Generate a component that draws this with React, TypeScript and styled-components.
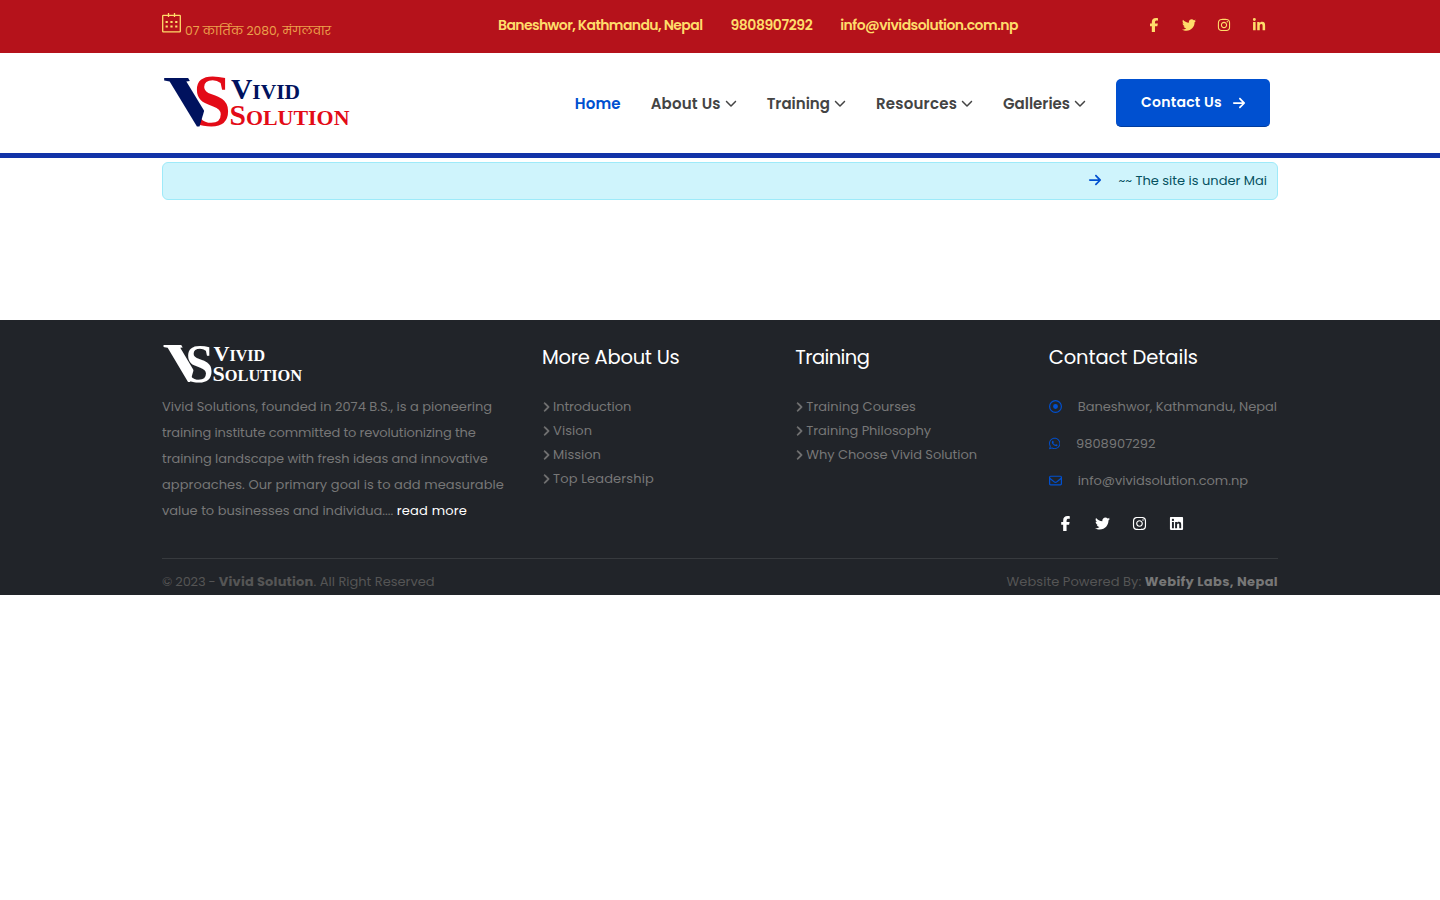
import React from "react";
import styled, { createGlobalStyle } from "styled-components";
import {
  FaFacebookF, FaTwitter, FaInstagram, FaLinkedinIn, FaLinkedin, FaArrowRight,
  FaRegCircleDot, FaWhatsapp, FaRegEnvelope, FaChevronRight, FaChevronDown,
} from "react-icons/fa6";

const Global = createGlobalStyle`
  *, *::before, *::after { box-sizing: border-box; }
  body { margin: 0; background: #fff; font-family: Poppins, Inter, "Noto Sans", sans-serif; font-size: 13px; color: #777; }
  a { color: inherit; text-decoration: none; }
  ul { list-style: none; margin: 0; padding: 0; }
  p, h4 { margin: 0; font-weight: 400; }
  svg { display: block; flex-shrink: 0; }
`;

const Container = styled.div`
  width: 1116px;
  margin: 0 auto;
`;

const TopBar = styled.div`
  height: 53px;
  background: #b5121b;
  color: #ffdc6a;
`;
const TopRow = styled(Container)`
  display: flex;
  height: 50px;
  align-items: center;
`;
const DateBox = styled.div`
  display: flex;
  align-self: flex-start;
  width: 336px;
  gap: 4px;
  padding-top: 13px;
`;
const DateText = styled.span`
  padding-top: 8px;
  font-size: 12.35px;
  line-height: 20px;
  color: #eba04b;
`;
const TopContacts = styled.div`
  display: flex;
  gap: 28px;
  font-size: 14px;
  font-weight: 600;
`;
const TopText = styled.span<{ $ls: number }>`
  letter-spacing: ${(p) => p.$ls}px;
  white-space: nowrap;
`;
const TopSocial = styled.div`
  display: flex;
  margin-left: auto;
  padding-right: 12px;
  gap: 21px;
  font-size: 14px;
`;

const Header = styled.header`
  height: 105px;
  border-bottom: 5px solid #1233a8;
`;
const HeaderRow = styled(Container)`
  display: flex;
  align-items: center;
  height: 100px;
  padding-right: 8px;
`;
const Nav = styled.nav`
  display: flex;
  align-items: center;
  margin-left: auto;
  gap: 30px;
  font-size: 15px;
  font-weight: 600;
`;
const NavItem = styled.a<{ $active?: boolean; $ls: number }>`
  display: flex;
  align-items: center;
  gap: 4px;
  letter-spacing: ${(p) => p.$ls}px;
  color: ${(p) => (p.$active ? "#0050d0" : "#444")};
`;
const ContactButton = styled.a`
  display: flex;
  align-items: center;
  justify-content: center;
  gap: 10px;
  width: 154px;
  height: 48px;
  padding-left: 1px;
  border-radius: 5px;
  background: #0050d0;
  border-bottom: 1px solid #003c9e;
  color: #fff;
  font-size: 14px;
  letter-spacing: 0.25px;
`;

const Notice = styled(Container)`
  display: flex;
  align-items: center;
  justify-content: flex-end;
  gap: 16px;
  height: 38px;
  margin-top: 4px;
  padding-right: 10px;
  border: 1px solid #9eeaf9;
  border-radius: 6px;
  background: #cff4fc;
  color: #055160;
  svg { color: #0050d0; margin-bottom: 2px; }
`;

const Footer = styled.footer`
  height: 275px;
  margin-top: 120px;
  padding-top: 24px;
  background: #212429;
`;
const Columns = styled(Container)`
  display: grid;
  grid-template-columns: 356px repeat(3, 229.33px);
  column-gap: 24px;
  height: 214px;
`;
const About = styled.p`
  padding-top: 9px;
  line-height: 26px;
  white-space: nowrap;
`;
const AboutLine = styled.span<{ $ls?: number }>`
  display: block;
  letter-spacing: ${(p) => p.$ls ?? 0}px;
  a { color: #fff; letter-spacing: 0.2px; }
`;
const Title = styled.h4<{ $ls: number }>`
  padding-top: 1px;
  font-size: 19.5px;
  line-height: 26px;
  letter-spacing: ${(p) => p.$ls}px;
  color: #fff;
  margin-bottom: 24px;
`;
const LinkRow = styled.li<{ $ls: number }>`
  display: flex;
  align-items: center;
  gap: 2px;
  height: 24px;
  margin-left: -1px;
  letter-spacing: ${(p) => p.$ls}px;
  white-space: nowrap;
`;
const ContactRow = styled.li<{ $icon?: number }>`
  display: flex;
  align-items: center;
  gap: 16px;
  height: 24px;
  margin-bottom: 13px;
  white-space: nowrap;
  svg { width: ${(p) => p.$icon ?? 13}px; color: #0050d0; margin-bottom: 1px; }
`;
const FootSocial = styled.div`
  display: flex;
  gap: 22px;
  padding: 10px 0 0 9px;
  color: #fff;
  font-size: 15px;
`;
const Bottom = styled(Container)`
  display: flex;
  justify-content: space-between;
  padding-top: 13px;
  border-top: 1px solid #373a3e;
  line-height: 20px;
  color: #555;
`;
const Credit = styled.span<{ $ls: number }>`
  letter-spacing: ${(p) => p.$ls}px;
`;
const Strong = styled.b<{ $ls: number; $color: string }>`
  letter-spacing: ${(p) => p.$ls}px;
  color: ${(p) => p.$color};
`;

const CalendarIcon = () => (
  <svg width="19" height="20" viewBox="0 0 19 20" fill="none" stroke="#ffdc6a" strokeWidth="1.3">
    <rect x="0.7" y="2.4" width="17.6" height="16.4" rx="0.6" />
    <path d="M6.5 0v4M12.5 0v4" />
    <path d="M3.6 8.9h2.2M8.4 8.9h2.2M13.2 8.9h2.2M3.6 13.4h2.2M8.4 13.4h2.2M13.2 13.4h2.2" strokeWidth="2" />
  </svg>
);

function Logo({ id, width, height, blue, red, edge }: { id: string; width: number; height: number; blue: string; red: string; edge: string }) {
  return (
    <svg width={width} height={height} viewBox="0 0 190 54" preserveAspectRatio="none" fontFamily="Liberation Serif" fontWeight="700">
      <clipPath id={id}><path d="M0 0H25L43 32L36.5 54H0z" /></clipPath>
      <text x="31" y="50" fontSize="73" fill={red} textLength="38" lengthAdjust="spacingAndGlyphs">S</text>
      <g clipPath={`url(#${id})`}>
        <text x="1" y="49" fontSize="72" fill={blue} stroke={edge} strokeWidth="1" paintOrder="stroke" textLength="74" lengthAdjust="spacingAndGlyphs">V</text>
      </g>
      <text x="69" y="23" fontSize="29" fill={blue} textLength="69" lengthAdjust="spacingAndGlyphs">V<tspan fontSize="21">IVID</tspan></text>
      <text x="67.5" y="49" fontSize="29" fill={red} textLength="120" lengthAdjust="spacingAndGlyphs">S<tspan fontSize="21.5">OLUTION</tspan></text>
    </svg>
  );
}

type Item = [label: string, spacing: number];
const navItems: Item[] = [["About Us", 0.2], ["Training", 0], ["Resources", 0.23], ["Galleries", 0]];
const aboutLinks: Item[] = [["Introduction", -0.07], ["Vision", 0.1], ["Mission", 0], ["Top Leadership", 0.15]];
const trainingLinks: Item[] = [["Training Courses", 0.03], ["Training Philosophy", -0.07], ["Why Choose Vivid Solution", -0.05]];

const LinkList = ({ items }: { items: Item[] }) => (
  <ul>
    {items.map(([label, ls]) => (
      <LinkRow key={label} $ls={ls}><FaChevronRight size={10} strokeWidth={30} /><a href="#">{label}</a></LinkRow>
    ))}
  </ul>
);

export default function App() {
  return (
    <>
      <Global />
      <TopBar>
        <TopRow>
          <DateBox><CalendarIcon /><DateText>07 कार्तिक 2080, मंगलवार</DateText></DateBox>
          <TopContacts>
            <TopText $ls={-0.61}>Baneshwor, Kathmandu, Nepal</TopText>
            <TopText $ls={-0.43}>9808907292</TopText>
            <TopText $ls={-0.53}>info@vividsolution.com.np</TopText>
          </TopContacts>
          <TopSocial><FaFacebookF /><FaTwitter /><FaInstagram /><FaLinkedinIn /></TopSocial>
        </TopRow>
      </TopBar>
      <Header>
        <HeaderRow>
          <Logo id="mark-header" width={190} height={54} blue="#00125e" red="#e30b17" edge="#fff" />
          <Nav>
            <NavItem $active $ls={0.15} href="#">Home</NavItem>
            {navItems.map(([label, ls]) => (
              <NavItem key={label} $ls={ls} href="#">{label}<FaChevronDown size={12} /></NavItem>
            ))}
            <ContactButton href="#">Contact Us<FaArrowRight size={14} /></ContactButton>
          </Nav>
        </HeaderRow>
      </Header>
      <Notice><FaArrowRight size={14} /><span>~~ The site is under Mai</span></Notice>
      <Footer>
        <Columns>
          <div>
            <Logo id="mark-footer" width={142} height={41} blue="#fff" red="#fff" edge="#212429" />
            <About>
              <AboutLine>Vivid Solutions, founded in 2074 B.S., is a pioneering</AboutLine>
              <AboutLine $ls={-0.13}>training institute committed to revolutionizing the</AboutLine>
              <AboutLine $ls={-0.06}>training landscape with fresh ideas and innovative</AboutLine>
              <AboutLine $ls={0.07}>approaches. Our primary goal is to add measurable</AboutLine>
              <AboutLine>value to businesses and individua.... <a href="#">read more</a></AboutLine>
            </About>
          </div>
          <div><Title $ls={-0.25}>More About Us</Title><LinkList items={aboutLinks} /></div>
          <div><Title $ls={-0.6}>Training</Title><LinkList items={trainingLinks} /></div>
          <div>
            <Title $ls={-0.07}>Contact Details</Title>
            <ul>
              <ContactRow><FaRegCircleDot />Baneshwor, Kathmandu, Nepal</ContactRow>
              <ContactRow $icon={11.4}><FaWhatsapp />9808907292</ContactRow>
              <ContactRow><FaRegEnvelope />info@vividsolution.com.np</ContactRow>
            </ul>
            <FootSocial><FaFacebookF /><FaTwitter /><FaInstagram /><FaLinkedin /></FootSocial>
          </div>
        </Columns>
        <Bottom>
          <Credit $ls={0}>
            <Credit $ls={-0.2}>© 2023 - </Credit><Strong $ls={0.2} $color="#555">Vivid Solution</Strong>. All Right Reserved
          </Credit>
          <Credit $ls={0.06}>Website Powered By: <Strong $ls={0.35} $color="#777">Webify Labs, Nepal</Strong></Credit>
        </Bottom>
      </Footer>
    </>
  );
}
